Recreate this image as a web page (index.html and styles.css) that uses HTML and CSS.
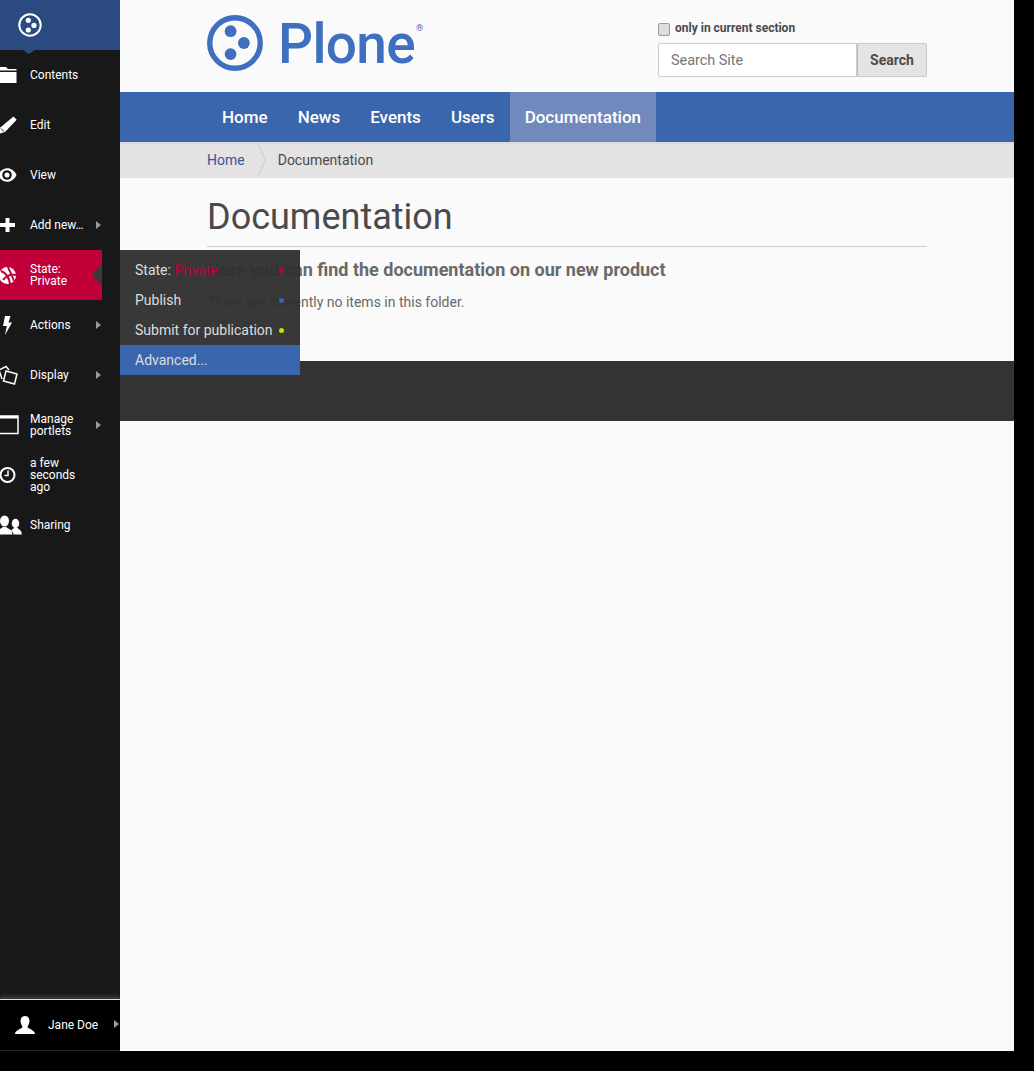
FILE: index.html
```html
<!DOCTYPE html>
<html lang="en">
<head>
    <meta charset="UTF-8">
    <title>Documentation</title>
    <link rel="stylesheet" href="styles.css">
</head>
<body>
    <div class="page">
        <aside class="toolbar">
            <div class="toolbar-logo">
                <svg width="24" height="24" viewBox="0 0 24 24">
                    <circle cx="12" cy="12" r="10.7" fill="none" stroke="#fff" stroke-width="2"/>
                    <circle cx="10.3" cy="7.3" r="2.6" fill="#fff"/>
                    <circle cx="16" cy="12.4" r="2.6" fill="#fff"/>
                    <circle cx="10.3" cy="17" r="2.6" fill="#fff"/>
                </svg>
            </div>
            <nav class="toolbar-items">
                <a class="tool">
                    <svg class="tool-icon" width="30" height="20" viewBox="0 0 30 20"><path d="M-2 2h8l2 2h8.500v1.500H-2zM-2 7h18.500v11H-2z" fill="#fff"/></svg>
                    <span>Contents</span>
                </a>
                <a class="tool">
                    <svg class="tool-icon" width="30" height="20" viewBox="0 0 30 20"><path d="M13.500 1.500l3.200 3.200L5 17l-5 1.500-1-.5v-4.500z" fill="#fff"/><path d="M1 13.500l3 3" stroke="#181818"/></svg>
                    <span>Edit</span>
                </a>
                <a class="tool">
                    <svg class="tool-icon" width="30" height="20" viewBox="0 0 30 20"><path d="M-2 10C2 1 12.500 1 16.500 10 12.500 19 2 19-2 10z" fill="#fff"/><circle cx="7" cy="10" r="4.800" fill="#181818"/><circle cx="7" cy="10" r="2.500" fill="#fff"/></svg>
                    <span>View</span>
                </a>
                <a class="tool has-more">
                    <svg class="tool-icon" width="30" height="20" viewBox="0 0 30 20"><path d="M5.500 3h4v5H15v4H9.500v5h-4v-5H-1V8h6.500z" fill="#fff"/></svg>
                    <span>Add new…</span>
                </a>
                <a class="tool tool-state">
                    <svg class="tool-icon" width="30" height="20" viewBox="0 0 30 20"><circle cx="7.500" cy="10.500" r="8.500" fill="#fff"/><path d="M1 6c5 2 8 5 9 13M3 15c3-4 8-6 13-5M8 2c1 3 3 6 6 14" fill="none" stroke="#c1003a" stroke-width="2"/></svg>
                    <span>State:<br>Private</span>
                </a>
                <a class="tool has-more">
                    <svg class="tool-icon" width="30" height="20" viewBox="0 0 30 20"><path d="M5 1h5.500L8.500 7.500H12L5 20l1.800-9H3z" fill="#fff"/></svg>
                    <span>Actions</span>
                </a>
                <a class="tool has-more">
                    <svg class="tool-icon" width="30" height="20" viewBox="0 0 30 20"><path d="M9 5L6 1.500-1 5l3 9" fill="none" stroke="#fff" stroke-width="1.500"/><path d="M6 6l11 3-2.500 10-11-3z" fill="#181818" stroke="#fff" stroke-width="1.500"/></svg>
                    <span>Display</span>
                </a>
                <a class="tool has-more">
                    <svg class="tool-icon" width="30" height="20" viewBox="0 0 30 20"><path d="M-2 1h20v17.500H-2z" fill="none" stroke="#fff" stroke-width="1.500"/><path d="M-2 1h20v2.500H-2z" fill="#fff"/></svg>
                    <span>Manage<br>portlets</span>
                </a>
                <a class="tool">
                    <svg class="tool-icon" width="30" height="20" viewBox="0 0 30 20"><circle cx="7.500" cy="10" r="7" fill="none" stroke="#fff" stroke-width="2"/><path d="M8 5.500v5H4.500" fill="none" stroke="#fff" stroke-width="1.500"/></svg>
                    <span>a few<br>seconds<br>ago</span>
                </a>
                <a class="tool">
                    <svg class="tool-icon" width="30" height="20" viewBox="0 0 30 20"><ellipse cx="4.500" cy="6" rx="4.500" ry="5.500" fill="#fff"/><path d="M-2 19.500v-4l5-3.500h3l5.500 3.500 1 4z" fill="#fff"/><ellipse cx="15.500" cy="8.500" rx="3.700" ry="4.700" fill="#fff"/><path d="M13.500 19.500c0-2-1-3-2.500-4l3-2.500h3.500l3.500 3 1 3.500z" fill="#fff"/></svg>
                    <span>Sharing</span>
                </a>
            </nav>
            <div class="toolbar-user">
                <svg width="20" height="20" viewBox="0 0 20 20"><path d="M10 1c3 0 4.500 2.200 4.500 5 0 2.500-1.500 4.500-2 6 0 1.500 7.500 3 7.500 7H0c0-4 7.500-5.500 7.500-7-.5-1.500-2-3.500-2-6 0-2.800 1.500-5 4.500-5z" fill="#fff"/></svg>
                <span>Jane Doe</span>
            </div>
        </aside>

        <div class="state-menu">
            <div class="state-row state-current"><span>State: <em>Private</em></span><i class="dot dot-red"></i></div>
            <div class="state-row"><span>Publish</span><i class="dot dot-blue"></i></div>
            <div class="state-row"><span>Submit for publication</span><i class="dot dot-green"></i></div>
            <div class="state-row state-advanced"><span>Advanced...</span></div>
        </div>

        <main class="site">
            <header class="site-header">
                <div class="logo">
                    <svg width="56" height="56" viewBox="0 0 57 57">
                        <circle cx="28.500" cy="28.500" r="25.700" fill="none" stroke="#3f6fbf" stroke-width="5.500"/>
                        <circle cx="24" cy="16.500" r="6" fill="#3f6fbf"/>
                        <circle cx="37.500" cy="28.500" r="6" fill="#3f6fbf"/>
                        <circle cx="24" cy="39.800" r="6" fill="#3f6fbf"/>
                    </svg>
                    <span class="logo-name">Plone</span><span class="logo-mark">®</span>
                </div>
                <form class="search">
                    <label class="search-scope"><input type="checkbox"> only in current section</label>
                    <div class="search-row">
                        <div class="search-input">Search Site</div>
                        <div class="search-button">Search</div>
                    </div>
                </form>
            </header>

            <nav class="main-nav">
                <a>Home</a>
                <a>News</a>
                <a>Events</a>
                <a>Users</a>
                <a class="active">Documentation</a>
            </nav>

            <div class="breadcrumbs">
                <a>Home</a>
                <svg width="8" height="30" viewBox="0 0 8 30"><path d="M1 0l6 15-6 15" fill="none" stroke="#ccc"/></svg>
                <span>Documentation</span>
            </div>

            <article class="content">
                <h1>Documentation</h1>
                <p class="lead">Here you can find the documentation on our new product</p>
                <p class="empty">There are currently no items in this folder.</p>
            </article>

            <footer class="site-footer"></footer>
        </main>
    </div>
</body>
</html>
```

FILE: styles.css
```css
html, body {
    margin: 0;
    height: 100%;
    background: #000;
}

body {
    font-family: Roboto, "Liberation Sans", sans-serif;
    overflow: hidden;
}

.page {
    position: relative;
    display: flex;
    width: 1014px;
    height: 1051px;
    background: #fafafa;
}

/* toolbar */
.toolbar {
    display: flex;
    flex-direction: column;
    flex: none;
    width: 120px;
    background: #181818;
    overflow: hidden;
}

.toolbar-logo {
    display: flex;
    align-items: center;
    height: 50px;
    padding-left: 18px;
    box-sizing: border-box;
    background: #2b4b80;
    position: relative;
}

.toolbar-logo::after {
    content: "";
    position: absolute;
    left: 23px;
    bottom: -4px;
    border-left: 6px solid transparent;
    border-right: 6px solid transparent;
    border-top: 4px solid #2b4b80;
}

.toolbar-items {
    flex: 1;
}

.tool {
    display: flex;
    align-items: center;
    position: relative;
    height: 50px;
    color: #fff;
    font-size: 12px;
    line-height: 12px;
}

.tool-icon {
    flex: none;
    overflow: visible;
}

.has-more::after {
    content: "";
    position: absolute;
    left: 96px;
    top: 21px;
    border-top: 4px solid transparent;
    border-bottom: 4px solid transparent;
    border-left: 5px solid #999;
}

.tool-state {
    width: 102px;
    background: #c1003a;
}

.tool-state::after {
    content: "";
    position: absolute;
    right: 0;
    top: 14px;
    border-top: 11px solid transparent;
    border-bottom: 11px solid transparent;
    border-right: 10px solid #3a3a3a;
}

.toolbar-user {
    display: flex;
    align-items: center;
    gap: 13px;
    height: 52px;
    padding-left: 15px;
    box-sizing: border-box;
    background: #000;
    border-top: 1px solid #ddd;
    border-bottom: 1px solid #222;
    color: #fff;
    font-size: 12px;
    position: relative;
    box-shadow: 0 -3px 4px rgba(255, 255, 255, 0.15);
}

.toolbar-user::after {
    content: "";
    position: absolute;
    left: 114px;
    top: 20px;
    border-top: 4px solid transparent;
    border-bottom: 4px solid transparent;
    border-left: 5px solid #999;
}

/* workflow menu */
.state-menu {
    position: absolute;
    left: 120px;
    top: 250px;
    width: 180px;
    padding-top: 5px;
    background: rgba(48, 48, 48, 0.96);
    z-index: 2;
}

.state-row {
    display: flex;
    align-items: center;
    justify-content: space-between;
    height: 30px;
    padding: 0 16px 0 15px;
    color: #ddd;
    font-size: 14px;
}

.state-current em {
    font-style: normal;
    color: #c1003a;
}

.state-advanced {
    background: #3a66ae;
    color: #ddd;
}

.dot {
    width: 5px;
    height: 5px;
    border-radius: 50%;
}

.dot-red { background: #c1003a; }
.dot-blue { background: #3a66ae; }
.dot-green { background: #bfe600; }

/* site */
.site {
    flex: 1;
    min-width: 0;
}

.site-header {
    display: flex;
    justify-content: space-between;
    width: 720px;
    height: 92px;
    margin-left: 87px;
}

.logo {
    display: flex;
    align-items: flex-start;
    padding-top: 15px;
}

.logo svg {
    flex: none;
}

.logo-name {
    margin-left: 15px;
    margin-top: -4px;
    color: #3f6fbf;
    font-size: 55px;
    font-weight: 500;
    line-height: 66px;
    letter-spacing: -0.7px;
}

.logo-mark {
    margin-top: 8px;
    margin-left: 1px;
    color: #3f6fbf;
    font-size: 9px;
}

.search {
    width: 269px;
    padding-top: 20px;
}

.search-scope {
    display: flex;
    align-items: center;
    gap: 5px;
    height: 16px;
    color: #4a4a4a;
    font-size: 12px;
    font-weight: 700;
}

.search-scope input {
    appearance: none;
    width: 12px;
    height: 13px;
    margin: 3px 0 0;
    box-sizing: border-box;
    border: 1px solid #999;
    border-radius: 2px;
    background: #ddd;
}

.search-row {
    display: flex;
    height: 34px;
    margin-top: 7px;
}

.search-input {
    flex: 1;
    padding-left: 12px;
    line-height: 34px;
    border: 1px solid #ccc;
    border-radius: 2px 0 0 2px;
    background: #fff;
    color: #777;
    font-size: 14.4px;
}

.search-button {
    width: 70px;
    box-sizing: border-box;
    text-align: center;
    line-height: 32px;
    border: 1px solid #ccc;
    border-left-color: #bbb;
    border-radius: 0 2px 2px 0;
    background: #e4e4e4;
    color: #4a4a4a;
    font-size: 14px;
    font-weight: 700;
}

.main-nav {
    display: flex;
    height: 50px;
    padding-left: 87px;
    background: #3a66ae;
}

.main-nav a {
    padding: 0 15px;
    color: #fff;
    font-size: 17px;
    font-weight: 500;
    line-height: 50px;
}

.main-nav .active {
    background: #7289bd;
}

.breadcrumbs {
    display: flex;
    align-items: center;
    height: 36px;
    padding-left: 87px;
    background: #e4e2e2;
    box-shadow: inset 0 2px 2px rgba(0, 0, 0, 0.04);
    color: #4a4a4a;
    font-size: 14px;
}

.breadcrumbs a {
    color: #3f51a0;
}

.breadcrumbs svg {
    margin: 0 12px 0 13px;
}

.content {
    width: 720px;
    height: 183px;
    margin-left: 87px;
}

h1 {
    height: 69px;
    box-sizing: border-box;
    margin: 0;
    padding-top: 19px;
    border-bottom: 1px solid #ccc;
    color: #4a4a4a;
    font-size: 36px;
    font-weight: 400;
    line-height: 41px;
}

.lead {
    margin: 12px 0 0;
    color: #696969;
    font-size: 18px;
    font-weight: 700;
    line-height: 22px;
}

.empty {
    margin: 11px 0 0;
    color: #696969;
    font-size: 14px;
    line-height: 20px;
}

.site-footer {
    height: 60px;
    background: #333;
}
```
